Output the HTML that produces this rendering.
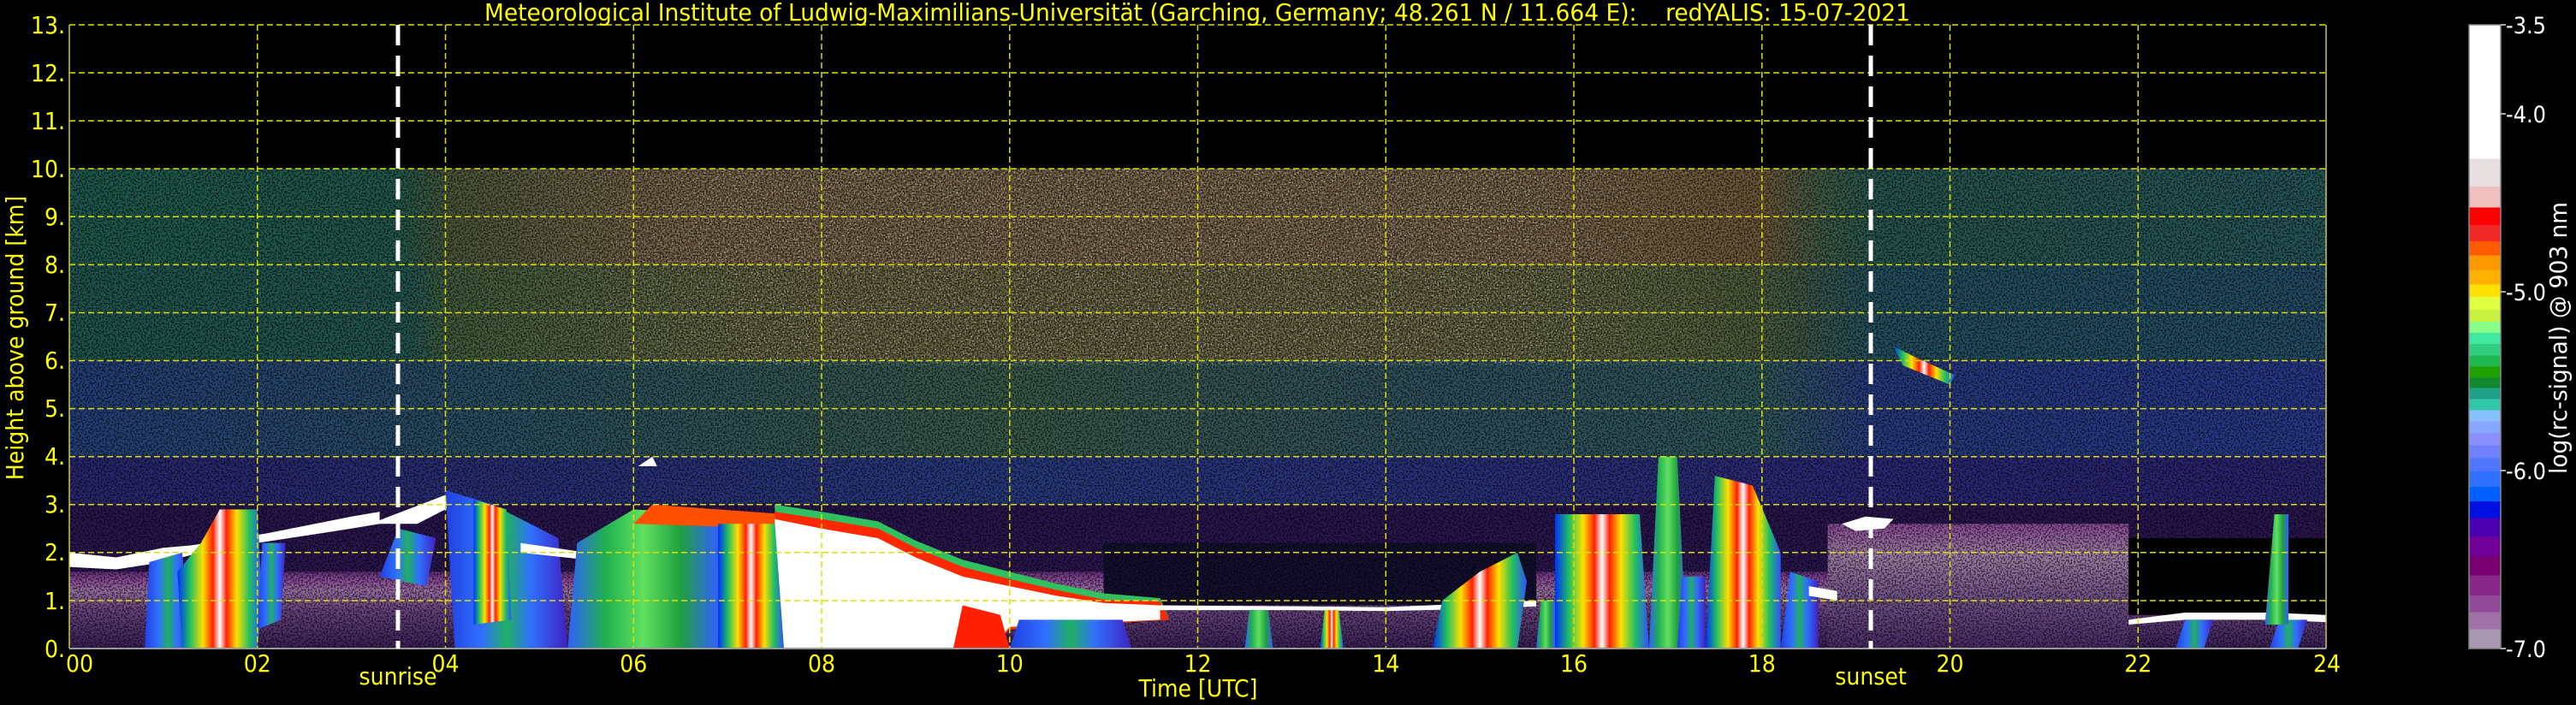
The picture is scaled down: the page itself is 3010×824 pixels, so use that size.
<!DOCTYPE html>
<html><head><meta charset="utf-8"><style>
html,body{margin:0;padding:0;background:#000;}
svg{display:block;}
text{font-family:"DejaVu Sans Condensed","DejaVu Sans","Liberation Sans",sans-serif;}
</style></head><body>
<svg width="3010" height="824" viewBox="0 0 3010 824" xmlns="http://www.w3.org/2000/svg">
<defs>
<filter id="nz" x="0" y="0" width="1" height="1">
<feTurbulence type="fractalNoise" baseFrequency="0.55" numOctaves="1" seed="3"/>
<feColorMatrix type="matrix" values="0 0 0 0 0  0 0 0 0 0  0 0 0 0 0  0 0 0 -6 3.3"/>
</filter>
<filter id="nzw" x="0" y="0" width="1" height="1">
<feTurbulence type="fractalNoise" baseFrequency="0.6" numOctaves="1" seed="7"/>
<feColorMatrix type="matrix" values="0 0 0 0 1  0 0 0 0 1  0 0 0 0 1  0 0 0 8 -4.6"/>
</filter>
<linearGradient id="wm" x1="0" x2="1" y1="0" y2="0">
<stop offset="0" stop-color="#fff" stop-opacity="0"/><stop offset="0.15" stop-color="#fff" stop-opacity="0"/><stop offset="0.3" stop-color="#fff" stop-opacity="1"/><stop offset="0.65" stop-color="#fff" stop-opacity="1"/><stop offset="0.77" stop-color="#fff" stop-opacity="0"/><stop offset="1" stop-color="#fff" stop-opacity="0"/>
</linearGradient>
<mask id="wmask" maskUnits="userSpaceOnUse" x="81" y="197" width="2637" height="230">
<rect x="81" y="197" width="2637" height="230" fill="url(#wm)"/>
</mask>
<linearGradient id="U1" x1="0" x2="1" y1="0" y2="0">
<stop offset="0" stop-color="#1f5a4e"/><stop offset="0.145" stop-color="#22584c"/><stop offset="0.17" stop-color="#4a5538"/><stop offset="0.27" stop-color="#6e5a40"/><stop offset="0.62" stop-color="#6e5a40"/><stop offset="0.75" stop-color="#6a5535"/><stop offset="0.78" stop-color="#3a5a48"/><stop offset="0.8" stop-color="#28564e"/><stop offset="1" stop-color="#25565a"/>
</linearGradient>
<linearGradient id="U2" x1="0" x2="1" y1="0" y2="0">
<stop offset="0" stop-color="#205550"/><stop offset="0.15" stop-color="#245650"/><stop offset="0.17" stop-color="#405a3a"/><stop offset="0.33" stop-color="#5e5a38"/><stop offset="0.6" stop-color="#5e5a38"/><stop offset="0.75" stop-color="#4a5a38"/><stop offset="0.8" stop-color="#24505e"/><stop offset="1" stop-color="#244c66"/>
</linearGradient>
<linearGradient id="M1" x1="0" x2="1" y1="0" y2="0">
<stop offset="0" stop-color="#243f7a"/><stop offset="0.2" stop-color="#2a5060"/><stop offset="0.42" stop-color="#3a5a4a"/><stop offset="0.62" stop-color="#2f5060"/><stop offset="0.75" stop-color="#30585a"/><stop offset="0.8" stop-color="#283a80"/><stop offset="1" stop-color="#28388a"/>
</linearGradient>
<linearGradient id="M2" x1="0" x2="1" y1="0" y2="0">
<stop offset="0" stop-color="#2a2670"/><stop offset="0.42" stop-color="#283a80"/><stop offset="0.8" stop-color="#2c2878"/><stop offset="1" stop-color="#2a2470"/>
</linearGradient>
<linearGradient id="BASE" x1="0" x2="0" y1="0" y2="1">
<stop offset="0" stop-color="#3a2058"/><stop offset="0.5" stop-color="#6a4480"/><stop offset="0.75" stop-color="#9a70a4"/><stop offset="0.9" stop-color="#8a4a98"/><stop offset="1" stop-color="#60307a"/>
</linearGradient>
<linearGradient id="SUN" x1="0" x2="0" y1="0" y2="1">
<stop offset="0" stop-color="#4a2a68"/><stop offset="0.45" stop-color="#7a5a8e"/><stop offset="0.75" stop-color="#a080a8"/><stop offset="1" stop-color="#8a4a98"/>
</linearGradient>
<linearGradient id="rb" x1="0" x2="1" y1="0" y2="0">
<stop offset="0" stop-color="#0030ff"/><stop offset="0.15" stop-color="#20c060"/><stop offset="0.3" stop-color="#ffe000"/><stop offset="0.42" stop-color="#ff2000"/><stop offset="0.5" stop-color="#ffffff"/><stop offset="0.58" stop-color="#ff2000"/><stop offset="0.7" stop-color="#ffe000"/><stop offset="0.85" stop-color="#20c060"/><stop offset="1" stop-color="#3050ff"/>
</linearGradient>
<linearGradient id="cg" x1="0" x2="1" y1="0" y2="0">
<stop offset="0" stop-color="#2040e0"/><stop offset="0.3" stop-color="#3070ff"/><stop offset="0.5" stop-color="#20b060"/><stop offset="0.7" stop-color="#3070ff"/><stop offset="1" stop-color="#4020c0"/>
</linearGradient>
<linearGradient id="cg2" x1="0" x2="1" y1="0" y2="0">
<stop offset="0" stop-color="#3060ff"/><stop offset="0.25" stop-color="#20b050"/><stop offset="0.5" stop-color="#60e060"/><stop offset="0.75" stop-color="#20a040"/><stop offset="1" stop-color="#3060ff"/>
</linearGradient>
<linearGradient id="cbar" x1="0" x2="0" y1="0" y2="1">
<stop offset="0" stop-color="#fff"/><stop offset="0.215" stop-color="#fff"/>
<stop offset="0.215" stop-color="#e8e0e0"/><stop offset="0.259" stop-color="#e8e0e0"/>
<stop offset="0.259" stop-color="#f0c0c0"/><stop offset="0.293" stop-color="#f0c0c0"/>
<stop offset="0.293" stop-color="#ff0000"/><stop offset="0.321" stop-color="#ff0000"/>
<stop offset="0.321" stop-color="#f02828"/><stop offset="0.347" stop-color="#f02828"/>
<stop offset="0.347" stop-color="#ff5a00"/><stop offset="0.37" stop-color="#ff5a00"/>
<stop offset="0.37" stop-color="#ff9900"/><stop offset="0.393" stop-color="#ff9900"/>
<stop offset="0.393" stop-color="#ffb000"/><stop offset="0.416" stop-color="#ffb000"/>
<stop offset="0.416" stop-color="#ffe000"/><stop offset="0.436" stop-color="#ffe000"/>
<stop offset="0.436" stop-color="#e0ff40"/><stop offset="0.457" stop-color="#e0ff40"/>
<stop offset="0.457" stop-color="#c8f040"/><stop offset="0.476" stop-color="#c8f040"/>
<stop offset="0.476" stop-color="#88ff88"/><stop offset="0.494" stop-color="#88ff88"/>
<stop offset="0.494" stop-color="#40e8a0"/><stop offset="0.512" stop-color="#40e8a0"/>
<stop offset="0.512" stop-color="#30d080"/><stop offset="0.53" stop-color="#30d080"/>
<stop offset="0.53" stop-color="#20b850"/><stop offset="0.548" stop-color="#20b850"/>
<stop offset="0.548" stop-color="#20a000"/><stop offset="0.566" stop-color="#20a000"/>
<stop offset="0.566" stop-color="#108830"/><stop offset="0.582" stop-color="#108830"/>
<stop offset="0.582" stop-color="#20a088"/><stop offset="0.6" stop-color="#20a088"/>
<stop offset="0.6" stop-color="#30c8a8"/><stop offset="0.618" stop-color="#30c8a8"/>
<stop offset="0.618" stop-color="#88c0ff"/><stop offset="0.636" stop-color="#88c0ff"/>
<stop offset="0.636" stop-color="#88a8ff"/><stop offset="0.654" stop-color="#88a8ff"/>
<stop offset="0.654" stop-color="#8c90ff"/><stop offset="0.674" stop-color="#8c90ff"/>
<stop offset="0.674" stop-color="#7080ff"/><stop offset="0.695" stop-color="#7080ff"/>
<stop offset="0.695" stop-color="#5078ff"/><stop offset="0.716" stop-color="#5078ff"/>
<stop offset="0.716" stop-color="#3070ff"/><stop offset="0.741" stop-color="#3070ff"/>
<stop offset="0.741" stop-color="#0060ff"/><stop offset="0.764" stop-color="#0060ff"/>
<stop offset="0.764" stop-color="#0010e0"/><stop offset="0.791" stop-color="#0010e0"/>
<stop offset="0.791" stop-color="#4a00b0"/><stop offset="0.82" stop-color="#4a00b0"/>
<stop offset="0.82" stop-color="#700098"/><stop offset="0.852" stop-color="#700098"/>
<stop offset="0.852" stop-color="#780070"/><stop offset="0.883" stop-color="#780070"/>
<stop offset="0.883" stop-color="#882888"/><stop offset="0.915" stop-color="#882888"/>
<stop offset="0.915" stop-color="#904a98"/><stop offset="0.942" stop-color="#904a98"/>
<stop offset="0.942" stop-color="#a070a8"/><stop offset="0.969" stop-color="#a070a8"/>
<stop offset="0.969" stop-color="#a898b0"/><stop offset="1" stop-color="#a898b0"/>
</linearGradient>
</defs>

<!-- data area in data coords -->
<g transform="translate(81,758) scale(109.875,-56.077)">
<rect x="0" y="8" width="24" height="2" fill="url(#U1)"/>
<rect x="0" y="6" width="24" height="2" fill="url(#U2)"/>
<rect x="0" y="4" width="24" height="2" fill="url(#M1)"/>
<rect x="0" y="3" width="24" height="1" fill="url(#M2)"/>
<rect x="0" y="1.5" width="24" height="1.5" fill="#2a1650"/>
<rect x="0" y="0" width="24" height="1.6" fill="url(#BASE)"/>
<rect x="18.7" y="0" width="3.2" height="2.6" fill="url(#SUN)"/>
<rect x="21.9" y="0.7" width="2.1" height="1.6" fill="#000"/>
<rect x="11" y="0.9" width="4.6" height="1.3" fill="#141030"/>
</g>
<!-- speckle textures -->
<rect x="81" y="197" width="2637" height="230" filter="url(#nzw)" mask="url(#wmask)" opacity="0.55"/>
<rect x="81" y="197" width="2637" height="561" filter="url(#nz)" opacity="0.6"/>

<g transform="translate(81,758) scale(109.875,-56.077)">
<polygon fill="#fff" points="0,2.0 0.5,1.9 1,2.1 1.3,2.15 2.1,2.4 3,2.75 3.3,2.85 3.3,2.6 3,2.5 2,2.2 1.3,1.95 1,1.8 0.5,1.65 0,1.7"/>
<polygon fill="url(#cg)" points="0.8,0 0.85,1.8 1.2,2.0 1.3,0"/>
<polygon fill="url(#rb)" points="1.2,0 1.15,1.6 1.4,2.2 1.6,2.9 2.0,2.9 2.05,1.0 2.0,0"/>
<polygon fill="url(#cg)" points="2,0.4 2.05,2.2 2.3,2.2 2.25,0.6"/>
<polygon fill="url(#cg)" points="3.3,1.5 3.5,2.5 3.9,2.3 3.8,1.3"/>
<polygon fill="#fff" points="3.2,2.6 3.6,2.9 4.0,3.2 4.1,3.0 3.7,2.6"/>
<polygon fill="url(#cg)" points="4.1,0 4.0,3.3 4.5,3.0 5.2,2.3 5.3,0"/>
<polygon fill="url(#rb)" points="4.3,0.5 4.3,3.1 4.65,2.9 4.7,0.6"/>
<polygon fill="#fff" points="4.8,2.2 5.5,2.0 6.0,2.3 6.0,2.1 5.5,1.85 4.8,2.0"/>
<polygon fill="url(#cg2)" points="5.3,0 5.4,2.2 6,2.9 6.9,2.8 6.9,0"/>
<polygon fill="#ff5000" points="6,2.6 6.2,3.0 7.6,2.8 7.6,2.5"/>
<polygon fill="url(#rb)" points="6.9,0 6.9,2.6 7.6,2.6 7.6,0"/>
<polygon fill="#30c060" points="7.6,0 7.5,3.0 8,2.85 8.6,2.65 9,2.25 9.5,1.85 10,1.6 10.5,1.35 11,1.15 11.6,1.05 11.7,0.6 10,0.4 9.8,0"/>
<polygon fill="#ff2800" points="7.6,0 7.5,2.85 8,2.7 8.6,2.5 9,2.1 9.5,1.7 10,1.45 10.5,1.22 11,1.02 11.6,0.98 11.7,0.6 10,0.4 9.8,0"/>
<polygon fill="#fff" points="7.6,0 7.5,2.7 8,2.5 8.6,2.3 9,1.9 9.5,1.5 10,1.3 10.5,1.1 11,0.95 11.6,0.9 11.6,0.6 10,0.45 9.8,0"/>
<polygon fill="#ff2000" points="9.4,0 9.5,0.9 9.9,0.7 10,0"/>
<polygon fill="url(#cg)" points="10,0 10.1,0.6 11.2,0.6 11.3,0"/>
<polygon fill="#fff" points="11.6,0.9 13,0.88 14,0.86 15,0.95 15.6,1.0 15.6,0.88 15,0.83 14,0.78 13,0.8 11.6,0.8"/>
<polygon fill="url(#cg2)" points="12.5,0 12.55,0.8 12.75,0.8 12.8,0"/>
<polygon fill="url(#rb)" points="13.3,0 13.35,0.8 13.5,0.8 13.55,0"/>
<polygon fill="url(#rb)" points="14.5,0 14.6,1.0 15.0,1.6 15.4,2.0 15.5,1.4 15.4,0"/>
<polygon fill="url(#cg2)" points="15.6,0 15.65,1.0 15.8,1.0 15.8,0"/>
<polygon fill="url(#rb)" points="15.8,0 15.8,2.8 16.7,2.8 16.8,0"/>
<polygon fill="url(#cg2)" points="16.8,0 16.9,4.0 17.1,4.0 17.2,0"/>
<polygon fill="url(#cg)" points="17.1,0 17.15,1.5 17.4,1.5 17.4,0"/>
<polygon fill="url(#rb)" points="17.4,0 17.5,3.6 17.9,3.4 18.2,2.0 18.2,0"/>
<polygon fill="url(#cg)" points="18.2,0 18.3,1.6 18.6,1.4 18.6,0"/>
<polygon fill="#fff" points="18.5,1.3 18.8,1.2 18.8,1.0 18.5,1.1"/>
<polygon fill="#fff" points="18.85,2.6 19.1,2.75 19.4,2.7 19.3,2.5 19.0,2.45"/>
<polygon fill="url(#rb)" points="19.4,6.3 19.5,5.9 20.0,5.5 20.05,5.7 19.6,6.1"/>
<polygon fill="#fff" points="21.9,0.6 22.5,0.75 23.4,0.75 24,0.7 24,0.55 23.4,0.6 22.5,0.6 21.9,0.5"/>
<polygon fill="url(#cg)" points="22.4,0 22.5,0.6 22.8,0.6 22.7,0"/>
<polygon fill="url(#cg)" points="23.4,0 23.5,0.6 23.8,0.6 23.7,0"/>
<polygon fill="url(#cg2)" points="23.35,0.5 23.45,2.8 23.6,2.8 23.6,0.5"/>
<polygon fill="#fff" points="6.05,3.8 6.2,4.0 6.25,3.8"/>
</g>

<!-- grid -->
<g stroke="#e0e000" stroke-width="1.5" stroke-dasharray="7,4" fill="none">
<path d="M81 85.1H2718M81 141.2H2718M81 197.2H2718M81 253.3H2718M81 309.4H2718M81 365.5H2718M81 421.5H2718M81 477.6H2718M81 533.7H2718M81 589.8H2718M81 645.8H2718M81 702H2718M81 29H2718"/>
<path d="M300.75 29V758M520.5 29V758M740.3 29V758M960 29V758M1179.8 29V758M1399.5 29V758M1619.3 29V758M1839 29V758M2058.8 29V758M2278.5 29V758M2498.3 29V758"/>
</g>
<path d="M81 29V758M2718 29V758" stroke="#c8c850" stroke-width="1.5"/>
<path d="M81 758H2718" stroke="#999" stroke-width="2"/>
<path d="M465 29V758M2186 29V758" stroke="#fff" stroke-width="5" stroke-dasharray="24,12"/>

<!-- text -->
<g fill="#ffff00" font-size="28">
<text x="566" y="24" textLength="1666" lengthAdjust="spacingAndGlyphs" xml:space="preserve">Meteorological Institute of Ludwig-Maximilians-Universität (Garching, Germany; 48.261 N / 11.664 E):    redYALIS: 15-07-2021</text>
<g text-anchor="end">
<text x="76" y="39">13.</text><text x="76" y="95">12.</text><text x="76" y="151">11.</text><text x="76" y="207">10.</text>
<text x="76" y="263">9.</text><text x="76" y="319">8.</text><text x="76" y="375">7.</text><text x="76" y="431">6.</text>
<text x="76" y="487">5.</text><text x="76" y="543">4.</text><text x="76" y="599">3.</text><text x="76" y="655">2.</text>
<text x="76" y="712">1.</text><text x="76" y="768">0.</text>
</g>
<g text-anchor="middle">
<text x="93" y="785">00</text><text x="300.75" y="785">02</text><text x="520.5" y="785">04</text><text x="740.3" y="785">06</text>
<text x="960" y="785">08</text><text x="1179.8" y="785">10</text><text x="1399.5" y="785">12</text><text x="1619.3" y="785">14</text>
<text x="1839" y="785">16</text><text x="2058.8" y="785">18</text><text x="2278.5" y="785">20</text><text x="2498.3" y="785">22</text><text x="2719" y="785">24</text>
<text x="465" y="800">sunrise</text><text x="2186" y="800">sunset</text>
<text x="1400" y="814">Time [UTC]</text>
<text transform="translate(27,395) rotate(-90)">Height above ground [km]</text>
</g>
</g>

<!-- colorbar -->
<rect x="2885" y="29" width="37" height="729" fill="url(#cbar)" stroke="#888" stroke-width="1.5"/>
<g stroke="#ddd" stroke-width="1.5">
<path d="M2922 29h6M2922 133h6M2922 341h6M2922 550h6M2922 758h6"/>
</g>
<g fill="#fff" font-size="27" style="font-family:'DejaVu Sans','Liberation Sans',sans-serif">
<text x="2928" y="39" textLength="47" lengthAdjust="spacingAndGlyphs">-3.5</text><text x="2928" y="143" textLength="47" lengthAdjust="spacingAndGlyphs">-4.0</text><text x="2928" y="351" textLength="47" lengthAdjust="spacingAndGlyphs">-5.0</text><text x="2928" y="560" textLength="47" lengthAdjust="spacingAndGlyphs">-6.0</text><text x="2928" y="768" textLength="47" lengthAdjust="spacingAndGlyphs">-7.0</text>
</g>
<text fill="#fff" font-size="28" text-anchor="middle" transform="translate(2999,395) rotate(-90)" textLength="318" lengthAdjust="spacingAndGlyphs">log(rc-signal) @ 903 nm</text>
</svg>
</body></html>
